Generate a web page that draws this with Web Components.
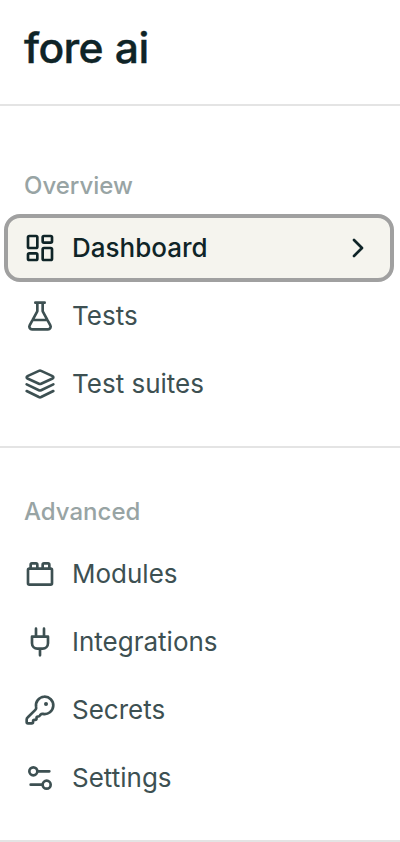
<!DOCTYPE html>
<html lang="en">
<head>
<meta charset="utf-8">
<title>fore ai</title>
<style>
body { margin: 0; background: #fff; font-family: Inter, sans-serif; color: #3d5052; }
</style>
</head>
<body>
<side-bar>
  <brand-mark slot="brand">fore ai</brand-mark>
  <nav-group label="Overview">
    <nav-item icon="dashboard" active>Dashboard</nav-item>
    <nav-item icon="flask">Tests</nav-item>
    <nav-item icon="layers">Test suites</nav-item>
  </nav-group>
  <nav-group label="Advanced" compact>
    <nav-item icon="brick">Modules</nav-item>
    <nav-item icon="plug">Integrations</nav-item>
    <nav-item icon="key">Secrets</nav-item>
    <nav-item icon="settings">Settings</nav-item>
  </nav-group>
</side-bar>
<script>
const ICONS = {
  dashboard: '<rect width="7" height="9" x="3" y="3" rx="1"/><rect width="7" height="5" x="14" y="3" rx="1"/><rect width="7" height="9" x="14" y="12" rx="1"/><rect width="7" height="5" x="3" y="16" rx="1"/>',
  flask: '<path d="M14 2v6a2 2 0 0 0 .245.96l5.51 10.08A2 2 0 0 1 18 22H6a2 2 0 0 1-1.755-2.96l5.51-10.08A2 2 0 0 0 10 8V2M6.453 15h11.094M8.5 2h7"/>',
  layers: '<path d="m12.83 2.18a2 2 0 0 0-1.66 0L2.6 6.08a1 1 0 0 0 0 1.83l8.58 3.91a2 2 0 0 0 1.66 0l8.58-3.9a1 1 0 0 0 0-1.83Z"/><path d="m22 17.3-9.17 4.5a2 2 0 0 1-1.66 0L2 17.3"/><path d="m22 12.3-9.17 4.4a2 2 0 0 1-1.66 0L2 12.3"/>',
  brick: '<rect width="18" height="12" x="3" y="8" rx="1"/><path d="M10 8V5c0-.6-.4-1-1-1H6a1 1 0 0 0-1 1v3M19 8V5c0-.6-.4-1-1-1h-3a1 1 0 0 0-1 1v3"/>',
  plug: '<path d="M12 22v-5M9 8V2M15 8V2M18 8v5a4 4 0 0 1-4 4h-4a4 4 0 0 1-4-4V8Z"/>',
  key: '<path d="M2.7 17.6A2 2 0 0 0 2 19.1V21a1 1 0 0 0 1 1h2.8a1 1 0 0 0 1-1v-.6a1 1 0 0 1 1-1h.6a1 1 0 0 0 1-1v-.5a1 1 0 0 1 1-1h.3a2 2 0 0 0 1.3-.9l.4-.5a2 2 0 0 1 1.8-.6a6.5 6.5 0 1 0-5.1-5.1c.2.8 0 1.5-.6 2.1z"/><circle cx="16.5" cy="7.5" r="1.5" fill="currentColor" stroke="none"/>',
  settings: '<path d="M14 17H5M19 7h-9"/><circle cx="17" cy="17" r="3"/><circle cx="7" cy="7" r="3"/>',
  chevron: '<path d="m9 18 6-6-6-6"/>'
};
const define = (name, render) => customElements.define(name, class extends HTMLElement {
  connectedCallback() {
    if (!this.shadowRoot) this.attachShadow({ mode: 'open' }).innerHTML = render(this);
  }
});

define('line-icon', el => `
  <style>
    :host { display: block; flex: none; width: 32px; height: 32px; }
    svg { display: block; width: 100%; height: 100%; fill: none; stroke: currentColor; stroke-width: 2; stroke-linecap: round; stroke-linejoin: round; }
  </style>
  <svg viewBox="0 0 24 24" aria-hidden="true">${ICONS[el.getAttribute('name')]}</svg>`);

define('brand-mark', () => `
  <style>
    :host { display: block; width: max-content; font-size: 41px; font-weight: 500; line-height: 48px; letter-spacing: -0.6px; word-spacing: 1px; color: #0f2427; white-space: nowrap; -webkit-text-stroke: 0.4px #0f2427; transform: scaleX(1.04); transform-origin: 0 0; }
  </style>
  <slot></slot>`);

define('nav-item', el => `
  <style>
    :host { display: flex; align-items: center; gap: 16px; box-sizing: border-box; height: 68px; margin: 0 6px 0 4px; padding: 0 20px; font-size: 26px; line-height: 32px; white-space: nowrap; }
    :host([active]) { padding: 0 16px; border: 4px solid #a0a0a0; border-radius: 16px; background: #f5f4ee; color: #0f2427; font-weight: 500; }
    span { flex: 1; }
  </style>
  <line-icon name="${el.getAttribute('icon')}"></line-icon>
  <span><slot></slot></span>
  ${el.hasAttribute('active') ? '<line-icon name="chevron"></line-icon>' : ''}`);

define('nav-group', el => `
  <style>
    :host { display: block; border-top: 2px solid #e4e4e4; padding: 64px 0 28px; }
    :host([compact]) { padding-top: 48px; }
    h2 { margin: 0 0 12px; padding: 0 24px; font-size: 24px; line-height: 32px; font-weight: 500; color: #98a4a4; }
  </style>
  <h2>${el.getAttribute('label')}</h2>
  <slot></slot>`);

define('side-bar', () => `
  <style>
    :host { display: block; box-sizing: border-box; height: 842px; overflow: hidden; border-bottom: 2px solid #e4e4e4; }
    header { box-sizing: border-box; height: 104px; padding: 24px 24px 0; }
  </style>
  <header><slot name="brand"></slot></header>
  <slot></slot>`);
</script>
</body>
</html>
